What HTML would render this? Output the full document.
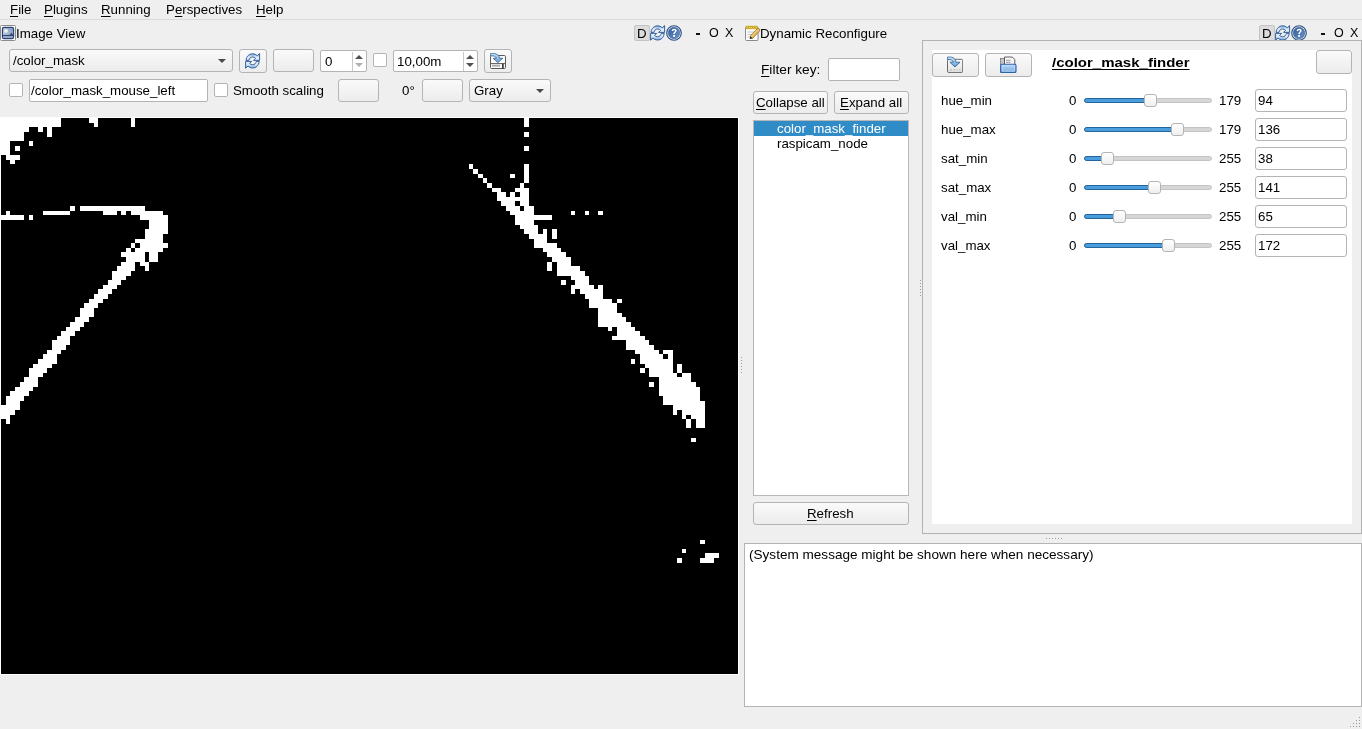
<!DOCTYPE html><html><head><meta charset="utf-8"><style>
html,body{margin:0;padding:0;}
body{width:1362px;height:729px;overflow:hidden;background:#efefef;position:relative;font-family:"Liberation Sans",sans-serif;}
div{position:absolute;box-sizing:border-box;}
.t{white-space:pre;line-height:1em;color:#000;will-change:transform;}
u{text-decoration:underline;text-underline-offset:2px;text-decoration-thickness:1px;}
.btn{border:1px solid #b4b4b4;border-radius:3px;background:linear-gradient(#fafafa,#ececec);}
.edit{border:1px solid #b4b4b4;border-radius:2px;background:#fff;}
.chk{border:1px solid #b4b4b4;border-radius:2px;background:#fff;}
.dbox{border:1px solid #c4c4c4;border-radius:2px;background:#dcdcdc;}
.frame{border:1px solid #b2b2b2;}
.groove{border:1px solid #c4c4c4;border-radius:3px;background:#d6d6d6;}
.fill{border:1px solid #23649a;border-radius:3px;background:#4a9ddc;}
.handle{border:1px solid #b4b4b4;border-radius:3px;background:linear-gradient(#ffffff,#efefef);}
</style></head><body>
<div class="" style="left:0px;top:19px;width:1362px;height:1px;background:#dadada"></div>
<div class="t" style="left:9.60px;top:2.54px;font-size:13.3px;font-weight:400;color:#000;"><u>F</u>ile</div>
<div class="t" style="left:44.10px;top:2.54px;font-size:13.3px;font-weight:400;color:#000;"><u>P</u>lugins</div>
<div class="t" style="left:101.40px;top:2.54px;font-size:13.3px;font-weight:400;color:#000;"><u>R</u>unning</div>
<div class="t" style="left:165.60px;top:2.54px;font-size:13.3px;font-weight:400;color:#000;">P<u>e</u>rspectives</div>
<div class="t" style="left:256.30px;top:2.54px;font-size:13.3px;font-weight:400;color:#000;"><u>H</u>elp</div>
<div style="left:0px;top:25px;width:16px;height:16px;"><svg width="16" height="16" viewBox="0 0 16 16"><defs><linearGradient id="sky" x1="1" y1="0" x2="0" y2="1"><stop offset="0" stop-color="#7e97c0"/><stop offset="1" stop-color="#cdd8ea"/></linearGradient></defs><rect x="0.5" y="0.5" width="15" height="15" rx="1" fill="#fff" stroke="#8c8c8c"/><rect x="2.4" y="2.4" width="11.2" height="11.3" rx="1.6" fill="url(#sky)" stroke="#2d4573" stroke-width="1.2"/><circle cx="6" cy="5.8" r="1.9" fill="#f4f9ec"/><path d="M9.6 10 L11.3 7.6 L13.2 10 Z" fill="#3e5272"/><rect x="3" y="9.9" width="10" height="1.3" fill="#2d4573"/><rect x="3" y="11.6" width="10" height="1.2" fill="#8ea2c4"/></svg></div>
<div class="t" style="left:15.50px;top:26.74px;font-size:13.3px;font-weight:400;color:#000;">Image View</div>
<div class="dbox" style="left:634px;top:25px;width:16px;height:16px;"></div>
<div class="t" style="left:637px;top:26.74px;font-size:13.3px">D</div>
<div style="position:absolute;left:650px;top:25px"><svg width="16" height="16" viewBox="0 0 16 16"><defs><linearGradient id="rga634" x1="0" y1="0" x2="0" y2="1"><stop offset="0" stop-color="#6f9bd3"/><stop offset="0.55" stop-color="#e4effb"/><stop offset="1" stop-color="#cfe2f7"/></linearGradient><linearGradient id="rgb634" x1="0" y1="0" x2="0" y2="1"><stop offset="0" stop-color="#e9f3fc"/><stop offset="0.5" stop-color="#d6e7f8"/><stop offset="1" stop-color="#6f9bd3"/></linearGradient></defs>
<path d="M1 7.4 C1.5 3 4.5 0.8 7.5 0.8 C9.5 0.8 11 1.6 12.2 2.8 L14.6 0.6 L14.6 7.4 L8.5 7.4 L10.6 5.3 C9.8 4.5 8.8 4 7.6 4 C5.6 4 4.2 5.5 3.9 7.4 Z" fill="url(#rga634)" stroke="#2c5b96" stroke-width="0.95" stroke-linejoin="miter"/>
<path d="M14.2 8.4 C13.7 12.8 10.7 15 7.7 15 C5.7 15 4.2 14.2 3 13 L0.6 15.2 L0.6 8.4 L6.7 8.4 L4.6 10.5 C5.4 11.3 6.4 11.8 7.6 11.8 C9.6 11.8 11 10.3 11.3 8.4 Z" fill="url(#rgb634)" stroke="#2c5b96" stroke-width="0.95" stroke-linejoin="miter"/></svg></div>
<div style="position:absolute;left:666px;top:25px"><svg width="16" height="16" viewBox="0 0 16 16"><defs><linearGradient id="hg634" x1="0" y1="0" x2="1" y2="1"><stop offset="0" stop-color="#2f5d9c"/><stop offset="1" stop-color="#6b93c8"/></linearGradient></defs>
<circle cx="8" cy="8" r="7.3" fill="#e8f0fa" stroke="#2b4c7e" stroke-width="1.1"/><circle cx="8" cy="8" r="5.7" fill="url(#hg634)" stroke="#3a5f95" stroke-width="0.6"/>
<path d="M5.7 6.1 C5.7 4.5 6.9 3.7 8.2 3.7 C9.7 3.7 10.6 4.6 10.6 5.8 C10.6 7.3 8.9 7.5 8.9 9.1 L7.3 9.1 C7.3 7 9 6.8 9 5.9 C9 5.3 8.6 5 8.1 5 C7.5 5 7.2 5.5 7.2 6.1 Z" fill="#fff"/><rect x="7.2" y="10" width="1.8" height="1.9" fill="#fff"/></svg></div>
<div class="" style="left:696px;top:32.5px;width:4px;height:2.5px;background:#111"></div>
<div class="t" style="left:708.80px;top:27.42px;font-size:12.5px;font-weight:400;color:#000;">O</div>
<div class="t" style="left:725.30px;top:27.42px;font-size:12.5px;font-weight:400;color:#000;">X</div>
<div class="btn" style="left:9px;top:49px;width:224px;height:23px;border-radius:3px"></div>
<div class="t" style="left:13.30px;top:53.74px;font-size:13.3px;font-weight:400;color:#000;">/color_mask</div>
<div style="left:218px;top:59px;width:0;height:0;border-left:4px solid transparent;border-right:4px solid transparent;border-top:4px solid #4a4a4a"></div>
<div class="btn" style="left:239px;top:49px;width:28px;height:24px;"></div>
<div style="left:245px;top:53px"><svg width="16" height="16" viewBox="0 0 16 16"><defs><linearGradient id="rgatb" x1="0" y1="0" x2="0" y2="1"><stop offset="0" stop-color="#6f9bd3"/><stop offset="0.55" stop-color="#e4effb"/><stop offset="1" stop-color="#cfe2f7"/></linearGradient><linearGradient id="rgbtb" x1="0" y1="0" x2="0" y2="1"><stop offset="0" stop-color="#e9f3fc"/><stop offset="0.5" stop-color="#d6e7f8"/><stop offset="1" stop-color="#6f9bd3"/></linearGradient></defs>
<path d="M1 7.4 C1.5 3 4.5 0.8 7.5 0.8 C9.5 0.8 11 1.6 12.2 2.8 L14.6 0.6 L14.6 7.4 L8.5 7.4 L10.6 5.3 C9.8 4.5 8.8 4 7.6 4 C5.6 4 4.2 5.5 3.9 7.4 Z" fill="url(#rgatb)" stroke="#2c5b96" stroke-width="0.95" stroke-linejoin="miter"/>
<path d="M14.2 8.4 C13.7 12.8 10.7 15 7.7 15 C5.7 15 4.2 14.2 3 13 L0.6 15.2 L0.6 8.4 L6.7 8.4 L4.6 10.5 C5.4 11.3 6.4 11.8 7.6 11.8 C9.6 11.8 11 10.3 11.3 8.4 Z" fill="url(#rgbtb)" stroke="#2c5b96" stroke-width="0.95" stroke-linejoin="miter"/></svg></div>
<div class="btn" style="left:273px;top:49px;width:41px;height:23px;"></div>
<div class="edit" style="left:320px;top:50px;width:47px;height:22px;"></div>
<div class="" style="left:352px;top:52px;width:1px;height:19px;background:#c8c8c8"></div>
<div class="t" style="left:325.10px;top:55.04px;font-size:13.3px;font-weight:400;color:#000;">0</div>
<div style="left:355px;top:55px;width:0;height:0;border-left:4px solid transparent;border-right:4px solid transparent;border-bottom:4px solid #505050"></div>
<div style="left:355px;top:63px;width:0;height:0;border-left:4px solid transparent;border-right:4px solid transparent;border-top:4px solid #b0b0b0"></div>
<div class="chk" style="left:373px;top:53px;width:14px;height:14px;"></div>
<div class="edit" style="left:393px;top:50px;width:85px;height:22px;"></div>
<div class="" style="left:463px;top:52px;width:1px;height:19px;background:#c8c8c8"></div>
<div class="t" style="left:397.30px;top:54.94px;font-size:13.3px;font-weight:400;color:#000;">10,00m</div>
<div style="left:466px;top:55px;width:0;height:0;border-left:4px solid transparent;border-right:4px solid transparent;border-bottom:4px solid #505050"></div>
<div style="left:466px;top:63px;width:0;height:0;border-left:4px solid transparent;border-right:4px solid transparent;border-top:4px solid #505050"></div>
<div class="btn" style="left:484px;top:49px;width:28px;height:24px;"></div>
<div style="left:490px;top:53px"><svg width="16" height="16" viewBox="0 0 16 16"><defs><linearGradient id="sg1" x1="0" y1="0" x2="0" y2="1"><stop offset="0" stop-color="#d4e8f9"/><stop offset="1" stop-color="#5f9ad6"/></linearGradient></defs><rect x="0.5" y="2.5" width="15" height="13" rx="1.2" fill="#fbfbfb" stroke="#5a5a5a"/><path d="M0.5 10.6 H15.5" stroke="#5a5a5a"/><rect x="2" y="11.8" width="8" height="1.8" fill="#a8a8a8"/><rect x="12.2" y="10.8" width="1.4" height="4.6" fill="#111"/><path d="M0.3 0.4 C4 0.1 8.8 0.6 9.6 5.3 L12.8 5.3 L7.9 9.6 L3.2 5.3 L6.4 5.3 C6 3.2 3.5 2.6 0.3 2.8 Z" fill="url(#sg1)" stroke="#2a5c93" stroke-width="0.8" stroke-linejoin="round"/></svg></div>
<div class="chk" style="left:9px;top:83px;width:14px;height:14px;"></div>
<div class="edit" style="left:29px;top:79px;width:179px;height:23px;"></div>
<div class="t" style="left:31.30px;top:83.74px;font-size:13.3px;font-weight:400;color:#000;">/color_mask_mouse_left</div>
<div class="chk" style="left:214px;top:83px;width:14px;height:14px;"></div>
<div class="t" style="left:232.50px;top:83.74px;font-size:13.3px;font-weight:400;color:#000;">Smooth scaling</div>
<div class="btn" style="left:338px;top:79px;width:41px;height:23px;"></div>
<div class="t" style="left:401.80px;top:83.74px;font-size:13.3px;font-weight:400;color:#000;">0°</div>
<div class="btn" style="left:422px;top:79px;width:41px;height:23px;"></div>
<div class="btn" style="left:469px;top:79px;width:82px;height:23px;"></div>
<div class="t" style="left:473.60px;top:83.74px;font-size:13.3px;font-weight:400;color:#000;">Gray</div>
<div style="left:536px;top:89px;width:0;height:0;border-left:4px solid transparent;border-right:4px solid transparent;border-top:4px solid #4a4a4a"></div>
<div style="left:0px;top:117px;width:739px;height:558px;background:#fff"></div>
<div id="mask" style="left:1px;top:118px;width:737px;height:556px;background:#000;overflow:hidden"><svg width="741" height="556" viewBox="0 0 160 120" style="position:absolute;left:-0.5px;top:0" shape-rendering="crispEdges"><g fill="#fff"><rect x="0" y="0" width="13" height="1"/><rect x="19" y="0" width="2" height="1"/><rect x="28" y="0" width="1" height="1"/><rect x="113" y="0" width="1" height="1"/><rect x="0" y="1" width="13" height="1"/><rect x="20" y="1" width="1" height="1"/><rect x="28" y="1" width="1" height="1"/><rect x="113" y="1" width="1" height="1"/><rect x="0" y="2" width="6" height="1"/><rect x="8" y="2" width="1" height="1"/><rect x="10" y="2" width="1" height="1"/><rect x="0" y="3" width="5" height="1"/><rect x="10" y="3" width="1" height="1"/><rect x="113" y="3" width="1" height="1"/><rect x="0" y="4" width="5" height="1"/><rect x="0" y="5" width="2" height="1"/><rect x="6" y="5" width="1" height="1"/><rect x="0" y="6" width="2" height="1"/><rect x="3" y="6" width="1" height="1"/><rect x="113" y="6" width="1" height="1"/><rect x="0" y="7" width="2" height="1"/><rect x="1" y="8" width="3" height="1"/><rect x="2" y="9" width="1" height="1"/><rect x="101" y="10" width="1" height="1"/><rect x="113" y="10" width="1" height="1"/><rect x="102" y="11" width="1" height="1"/><rect x="113" y="11" width="1" height="1"/><rect x="103" y="12" width="1" height="1"/><rect x="110" y="12" width="1" height="1"/><rect x="113" y="12" width="1" height="1"/><rect x="104" y="13" width="1" height="1"/><rect x="113" y="13" width="1" height="1"/><rect x="105" y="14" width="1" height="1"/><rect x="112" y="14" width="1" height="1"/><rect x="106" y="15" width="2" height="1"/><rect x="111" y="15" width="3" height="1"/><rect x="107" y="16" width="2" height="1"/><rect x="110" y="16" width="1" height="1"/><rect x="112" y="16" width="2" height="1"/><rect x="107" y="17" width="7" height="1"/><rect x="108" y="18" width="3" height="1"/><rect x="112" y="18" width="2" height="1"/><rect x="15" y="19" width="1" height="1"/><rect x="17" y="19" width="14" height="1"/><rect x="109" y="19" width="3" height="1"/><rect x="113" y="19" width="2" height="1"/><rect x="1" y="20" width="1" height="1"/><rect x="9" y="20" width="6" height="1"/><rect x="22" y="20" width="3" height="1"/><rect x="26" y="20" width="1" height="1"/><rect x="28" y="20" width="7" height="1"/><rect x="110" y="20" width="5" height="1"/><rect x="123" y="20" width="1" height="1"/><rect x="126" y="20" width="1" height="1"/><rect x="129" y="20" width="1" height="1"/><rect x="0" y="21" width="5" height="1"/><rect x="6" y="21" width="1" height="1"/><rect x="30" y="21" width="6" height="1"/><rect x="111" y="21" width="8" height="1"/><rect x="32" y="22" width="4" height="1"/><rect x="111" y="22" width="4" height="1"/><rect x="32" y="23" width="4" height="1"/><rect x="112" y="23" width="4" height="1"/><rect x="31" y="24" width="5" height="1"/><rect x="113" y="24" width="3" height="1"/><rect x="117" y="24" width="1" height="1"/><rect x="119" y="24" width="1" height="1"/><rect x="31" y="25" width="4" height="1"/><rect x="114" y="25" width="4" height="1"/><rect x="119" y="25" width="1" height="1"/><rect x="29" y="26" width="6" height="1"/><rect x="115" y="26" width="3" height="1"/><rect x="28" y="27" width="1" height="1"/><rect x="30" y="27" width="6" height="1"/><rect x="115" y="27" width="5" height="1"/><rect x="27" y="28" width="1" height="1"/><rect x="29" y="28" width="6" height="1"/><rect x="117" y="28" width="4" height="1"/><rect x="26" y="29" width="5" height="1"/><rect x="32" y="29" width="2" height="1"/><rect x="118" y="29" width="4" height="1"/><rect x="27" y="30" width="4" height="1"/><rect x="32" y="30" width="2" height="1"/><rect x="119" y="30" width="4" height="1"/><rect x="26" y="31" width="3" height="1"/><rect x="30" y="31" width="2" height="1"/><rect x="118" y="31" width="1" height="1"/><rect x="120" y="31" width="3" height="1"/><rect x="25" y="32" width="4" height="1"/><rect x="31" y="32" width="1" height="1"/><rect x="118" y="32" width="1" height="1"/><rect x="120" y="32" width="5" height="1"/><rect x="24" y="33" width="4" height="1"/><rect x="120" y="33" width="6" height="1"/><rect x="24" y="34" width="3" height="1"/><rect x="123" y="34" width="4" height="1"/><rect x="23" y="35" width="3" height="1"/><rect x="121" y="35" width="1" height="1"/><rect x="124" y="35" width="3" height="1"/><rect x="22" y="36" width="3" height="1"/><rect x="123" y="36" width="5" height="1"/><rect x="129" y="36" width="1" height="1"/><rect x="21" y="37" width="3" height="1"/><rect x="123" y="37" width="1" height="1"/><rect x="125" y="37" width="5" height="1"/><rect x="20" y="38" width="3" height="1"/><rect x="126" y="38" width="4" height="1"/><rect x="19" y="39" width="3" height="1"/><rect x="127" y="39" width="5" height="1"/><rect x="133" y="39" width="1" height="1"/><rect x="18" y="40" width="3" height="1"/><rect x="127" y="40" width="6" height="1"/><rect x="17" y="41" width="3" height="1"/><rect x="129" y="41" width="4" height="1"/><rect x="17" y="42" width="3" height="1"/><rect x="129" y="42" width="5" height="1"/><rect x="16" y="43" width="3" height="1"/><rect x="129" y="43" width="6" height="1"/><rect x="15" y="44" width="3" height="1"/><rect x="129" y="44" width="7" height="1"/><rect x="14" y="45" width="3" height="1"/><rect x="131" y="45" width="1" height="1"/><rect x="133" y="45" width="4" height="1"/><rect x="13" y="46" width="3" height="1"/><rect x="133" y="46" width="5" height="1"/><rect x="12" y="47" width="3" height="1"/><rect x="132" y="47" width="7" height="1"/><rect x="11" y="48" width="4" height="1"/><rect x="135" y="48" width="5" height="1"/><rect x="11" y="49" width="3" height="1"/><rect x="135" y="49" width="6" height="1"/><rect x="10" y="50" width="3" height="1"/><rect x="137" y="50" width="5" height="1"/><rect x="143" y="50" width="2" height="1"/><rect x="9" y="51" width="3" height="1"/><rect x="138" y="51" width="5" height="1"/><rect x="144" y="51" width="1" height="1"/><rect x="8" y="52" width="4" height="1"/><rect x="136" y="52" width="1" height="1"/><rect x="138" y="52" width="7" height="1"/><rect x="7" y="53" width="4" height="1"/><rect x="139" y="53" width="6" height="1"/><rect x="146" y="53" width="1" height="1"/><rect x="6" y="54" width="4" height="1"/><rect x="138" y="54" width="1" height="1"/><rect x="140" y="54" width="5" height="1"/><rect x="146" y="54" width="1" height="1"/><rect x="6" y="55" width="3" height="1"/><rect x="140" y="55" width="6" height="1"/><rect x="147" y="55" width="2" height="1"/><rect x="5" y="56" width="3" height="1"/><rect x="142" y="56" width="7" height="1"/><rect x="4" y="57" width="4" height="1"/><rect x="140" y="57" width="1" height="1"/><rect x="142" y="57" width="8" height="1"/><rect x="3" y="58" width="4" height="1"/><rect x="142" y="58" width="9" height="1"/><rect x="2" y="59" width="4" height="1"/><rect x="142" y="59" width="9" height="1"/><rect x="1" y="60" width="4" height="1"/><rect x="143" y="60" width="8" height="1"/><rect x="1" y="61" width="3" height="1"/><rect x="143" y="61" width="9" height="1"/><rect x="0" y="62" width="4" height="1"/><rect x="145" y="62" width="7" height="1"/><rect x="0" y="63" width="3" height="1"/><rect x="145" y="63" width="1" height="1"/><rect x="147" y="63" width="5" height="1"/><rect x="0" y="64" width="2" height="1"/><rect x="147" y="64" width="1" height="1"/><rect x="149" y="64" width="3" height="1"/><rect x="1" y="65" width="1" height="1"/><rect x="148" y="65" width="1" height="1"/><rect x="150" y="65" width="2" height="1"/><rect x="148" y="66" width="1" height="1"/><rect x="150" y="66" width="2" height="1"/><rect x="149" y="69" width="1" height="1"/><rect x="151" y="91" width="1" height="1"/><rect x="147" y="93" width="1" height="1"/><rect x="152" y="94" width="3" height="1"/><rect x="146" y="95" width="1" height="1"/><rect x="151" y="95" width="3" height="1"/></g></svg></div>
<div class="" style="left:741px;top:357px;width:1px;height:1px;background:#9c9c9c"></div>
<div class="" style="left:741px;top:360px;width:1px;height:1px;background:#9c9c9c"></div>
<div class="" style="left:741px;top:363px;width:1px;height:1px;background:#9c9c9c"></div>
<div class="" style="left:741px;top:366px;width:1px;height:1px;background:#9c9c9c"></div>
<div class="" style="left:741px;top:369px;width:1px;height:1px;background:#9c9c9c"></div>
<div class="" style="left:741px;top:372px;width:1px;height:1px;background:#9c9c9c"></div>
<div style="left:744px;top:25px"><svg width="17" height="17" viewBox="0 0 17 17"><rect x="1.5" y="2" width="12.5" height="13.5" rx="1" fill="#fdfdfd" stroke="#8a8a8a"/><rect x="1.8" y="0.8" width="11.8" height="3.4" fill="#d9b52c"/><g fill="#f3df66" stroke="#a8891c" stroke-width="0.5"><circle cx="3.2" cy="2.4" r="1"/><circle cx="5.4" cy="2.4" r="1"/><circle cx="7.6" cy="2.4" r="1"/><circle cx="9.8" cy="2.4" r="1"/><circle cx="12" cy="2.4" r="1"/></g><path d="M3.5 7h7M3.5 9.5h6M3.5 12h5" stroke="#c4c4c4"/><path d="M6.2 11.2 L13 4 Q14.3 2.8 15.4 3.9 Q16.5 5 15.3 6.3 L8.5 13.5 Z" fill="#e6b95c" stroke="#86601c" stroke-width="0.7"/><path d="M7 11.8 L14.2 4.4" stroke="#f6dc9a" stroke-width="0.9"/><path d="M6.2 11.2 L5.7 13.9 L8.5 13.5 Z" fill="#222"/></svg></div>
<div class="t" style="left:759.60px;top:26.74px;font-size:13.3px;font-weight:400;color:#000;">Dynamic Reconfigure</div>
<div class="dbox" style="left:1259px;top:25px;width:16px;height:16px;"></div>
<div class="t" style="left:1262px;top:26.74px;font-size:13.3px">D</div>
<div style="position:absolute;left:1275px;top:25px"><svg width="16" height="16" viewBox="0 0 16 16"><defs><linearGradient id="rga1259" x1="0" y1="0" x2="0" y2="1"><stop offset="0" stop-color="#6f9bd3"/><stop offset="0.55" stop-color="#e4effb"/><stop offset="1" stop-color="#cfe2f7"/></linearGradient><linearGradient id="rgb1259" x1="0" y1="0" x2="0" y2="1"><stop offset="0" stop-color="#e9f3fc"/><stop offset="0.5" stop-color="#d6e7f8"/><stop offset="1" stop-color="#6f9bd3"/></linearGradient></defs>
<path d="M1 7.4 C1.5 3 4.5 0.8 7.5 0.8 C9.5 0.8 11 1.6 12.2 2.8 L14.6 0.6 L14.6 7.4 L8.5 7.4 L10.6 5.3 C9.8 4.5 8.8 4 7.6 4 C5.6 4 4.2 5.5 3.9 7.4 Z" fill="url(#rga1259)" stroke="#2c5b96" stroke-width="0.95" stroke-linejoin="miter"/>
<path d="M14.2 8.4 C13.7 12.8 10.7 15 7.7 15 C5.7 15 4.2 14.2 3 13 L0.6 15.2 L0.6 8.4 L6.7 8.4 L4.6 10.5 C5.4 11.3 6.4 11.8 7.6 11.8 C9.6 11.8 11 10.3 11.3 8.4 Z" fill="url(#rgb1259)" stroke="#2c5b96" stroke-width="0.95" stroke-linejoin="miter"/></svg></div>
<div style="position:absolute;left:1291px;top:25px"><svg width="16" height="16" viewBox="0 0 16 16"><defs><linearGradient id="hg1259" x1="0" y1="0" x2="1" y2="1"><stop offset="0" stop-color="#2f5d9c"/><stop offset="1" stop-color="#6b93c8"/></linearGradient></defs>
<circle cx="8" cy="8" r="7.3" fill="#e8f0fa" stroke="#2b4c7e" stroke-width="1.1"/><circle cx="8" cy="8" r="5.7" fill="url(#hg1259)" stroke="#3a5f95" stroke-width="0.6"/>
<path d="M5.7 6.1 C5.7 4.5 6.9 3.7 8.2 3.7 C9.7 3.7 10.6 4.6 10.6 5.8 C10.6 7.3 8.9 7.5 8.9 9.1 L7.3 9.1 C7.3 7 9 6.8 9 5.9 C9 5.3 8.6 5 8.1 5 C7.5 5 7.2 5.5 7.2 6.1 Z" fill="#fff"/><rect x="7.2" y="10" width="1.8" height="1.9" fill="#fff"/></svg></div>
<div class="" style="left:1321px;top:32.5px;width:4px;height:2.5px;background:#111"></div>
<div class="t" style="left:1333.80px;top:27.42px;font-size:12.5px;font-weight:400;color:#000;">O</div>
<div class="t" style="left:1350.30px;top:27.42px;font-size:12.5px;font-weight:400;color:#000;">X</div>
<div class="t" style="left:761.30px;top:62.74px;font-size:13.3px;font-weight:400;color:#000;transform:scaleX(1.03);transform-origin:0 0"><u>F</u>ilter key:</div>
<div class="edit" style="left:828px;top:58px;width:72px;height:23px;"></div>
<div class="btn" style="left:753px;top:91px;width:75px;height:23px;"></div>
<div class="t" style="left:755.80px;top:95.74px;font-size:13.3px;font-weight:400;color:#000;"><u>C</u>ollapse all</div>
<div class="btn" style="left:834px;top:91px;width:75px;height:23px;"></div>
<div class="t" style="left:839.50px;top:95.74px;font-size:13.3px;font-weight:400;color:#000;"><u>E</u>xpand all</div>
<div class="edit" style="left:753px;top:120px;width:156px;height:376px;border-radius:0;border-color:#b8b8b8"></div>
<div class="" style="left:754px;top:121px;width:154px;height:15px;background:#308cc6"></div>
<div class="t" style="left:776.70px;top:121.54px;font-size:13.3px;font-weight:400;color:#fff;">color_mask_finder</div>
<div class="t" style="left:776.70px;top:136.54px;font-size:13.3px;font-weight:400;color:#000;">raspicam_node</div>
<div class="btn" style="left:753px;top:502px;width:156px;height:23px;"></div>
<div class="t" style="left:807.00px;top:506.74px;font-size:13.3px;font-weight:400;color:#000;"><u>R</u>efresh</div>
<div class="frame" style="left:922px;top:40px;width:440px;height:494px;"></div>
<div class="" style="left:932px;top:50px;width:420px;height:474px;background:#fff"></div>
<div class="btn" style="left:932px;top:53px;width:47px;height:24px;"></div>
<div style="left:947px;top:56px"><svg width="16" height="17" viewBox="0 0 16 17"><defs><linearGradient id="lg1" x1="0" y1="0" x2="0" y2="1"><stop offset="0" stop-color="#d4e8f9"/><stop offset="1" stop-color="#5f9ad6"/></linearGradient><linearGradient id="lb1" x1="0" y1="0" x2="0" y2="1"><stop offset="0" stop-color="#ffffff"/><stop offset="1" stop-color="#dedede"/></linearGradient></defs><rect x="0.5" y="3.3" width="15.2" height="13.3" rx="1.5" fill="url(#lb1)" stroke="#6a6a6a"/><path d="M3 13.8h2M6.5 13.8h1.5M9.5 13.8h1M12 13.8h1.5" stroke="#bdbdbd" stroke-width="1.2"/><path d="M0.4 1.1 C4.5 0.7 8.4 1.4 9 6.2 L13.1 6.2 L8 11 L2.8 6.2 L6.4 6.2 C6 4.2 3.6 3.4 0.4 3.6 Z" fill="url(#lg1)" stroke="#2a5c93" stroke-width="0.8" stroke-linejoin="round"/></svg></div>
<div class="btn" style="left:985px;top:53px;width:47px;height:24px;"></div>
<div style="left:1000px;top:56px"><svg width="17" height="17" viewBox="0 0 17 17"><defs><linearGradient id="fb1" x1="0" y1="0" x2="0" y2="1"><stop offset="0" stop-color="#bcd9f6"/><stop offset="1" stop-color="#76a8e0"/></linearGradient></defs><rect x="0.5" y="2.5" width="4.2" height="14" fill="#c4c4c4" stroke="#7a7a7a" stroke-width="0.8"/><path d="M4.5 1 H12.3 L14.8 3.6 V9.5 H4.5 Z" fill="#f8f8f8" stroke="#505050" stroke-width="0.9"/><path d="M6 4.3 H10.5 M6 6.3 H10.5" stroke="#9a9a9a"/><rect x="0.7" y="8.3" width="15.3" height="8.2" rx="1.2" fill="url(#fb1)" stroke="#2e62a6" stroke-width="1.1"/><rect x="2.2" y="9.8" width="12.3" height="5.2" fill="none" stroke="#c6e0fb" stroke-width="0.6"/></svg></div>
<div class="t" style="left:1051.60px;top:56.04px;font-size:13.3px;font-weight:700;color:#000;text-decoration:underline;text-decoration-thickness:1px;text-underline-offset:2px;transform:scaleX(1.128);transform-origin:0 0">/color_mask_finder</div>
<div class="btn" style="left:1316px;top:50px;width:36px;height:24px;"></div>
<div class="t" style="left:940.80px;top:93.54px;font-size:13.3px;font-weight:400;color:#000;">hue_min</div>
<div class="t" style="left:1068.80px;top:93.54px;font-size:13.3px;font-weight:400;color:#000;">0</div>
<div class="groove" style="left:1084px;top:97.80000000000001px;width:128px;height:5.199999999999989px;"></div>
<div class="fill" style="left:1084px;top:97.80000000000001px;width:66px;height:5.199999999999989px;"></div>
<div class="handle" style="left:1144px;top:93.9px;width:13px;height:13.0px;"></div>
<div class="t" style="left:1219.00px;top:93.54px;font-size:13.3px;font-weight:400;color:#000;">179</div>
<div class="edit" style="left:1255px;top:89.0px;width:92px;height:23.200000000000003px;border-radius:3px"></div>
<div class="t" style="left:1258.30px;top:93.54px;font-size:13.3px;font-weight:400;color:#000;">94</div>
<div class="t" style="left:940.80px;top:122.54px;font-size:13.3px;font-weight:400;color:#000;">hue_max</div>
<div class="t" style="left:1068.80px;top:122.54px;font-size:13.3px;font-weight:400;color:#000;">0</div>
<div class="groove" style="left:1084px;top:126.80000000000001px;width:128px;height:5.199999999999989px;"></div>
<div class="fill" style="left:1084px;top:126.80000000000001px;width:92.5px;height:5.199999999999989px;"></div>
<div class="handle" style="left:1170.5px;top:122.9px;width:13.0px;height:13.0px;"></div>
<div class="t" style="left:1219.00px;top:122.54px;font-size:13.3px;font-weight:400;color:#000;">179</div>
<div class="edit" style="left:1255px;top:118.0px;width:92px;height:23.200000000000017px;border-radius:3px"></div>
<div class="t" style="left:1258.30px;top:122.54px;font-size:13.3px;font-weight:400;color:#000;">136</div>
<div class="t" style="left:940.80px;top:151.54px;font-size:13.3px;font-weight:400;color:#000;">sat_min</div>
<div class="t" style="left:1068.80px;top:151.54px;font-size:13.3px;font-weight:400;color:#000;">0</div>
<div class="groove" style="left:1084px;top:155.8px;width:128px;height:5.199999999999989px;"></div>
<div class="fill" style="left:1084px;top:155.8px;width:23px;height:5.199999999999989px;"></div>
<div class="handle" style="left:1101px;top:151.9px;width:13px;height:13.0px;"></div>
<div class="t" style="left:1219.00px;top:151.54px;font-size:13.3px;font-weight:400;color:#000;">255</div>
<div class="edit" style="left:1255px;top:147.0px;width:92px;height:23.200000000000017px;border-radius:3px"></div>
<div class="t" style="left:1258.30px;top:151.54px;font-size:13.3px;font-weight:400;color:#000;">38</div>
<div class="t" style="left:940.80px;top:180.54px;font-size:13.3px;font-weight:400;color:#000;">sat_max</div>
<div class="t" style="left:1068.80px;top:180.54px;font-size:13.3px;font-weight:400;color:#000;">0</div>
<div class="groove" style="left:1084px;top:184.8px;width:128px;height:5.199999999999989px;"></div>
<div class="fill" style="left:1084px;top:184.8px;width:69.79999999999995px;height:5.199999999999989px;"></div>
<div class="handle" style="left:1147.8px;top:180.9px;width:13.0px;height:13.0px;"></div>
<div class="t" style="left:1219.00px;top:180.54px;font-size:13.3px;font-weight:400;color:#000;">255</div>
<div class="edit" style="left:1255px;top:176.0px;width:92px;height:23.200000000000017px;border-radius:3px"></div>
<div class="t" style="left:1258.30px;top:180.54px;font-size:13.3px;font-weight:400;color:#000;">141</div>
<div class="t" style="left:940.80px;top:209.54px;font-size:13.3px;font-weight:400;color:#000;">val_min</div>
<div class="t" style="left:1068.80px;top:209.54px;font-size:13.3px;font-weight:400;color:#000;">0</div>
<div class="groove" style="left:1084px;top:213.8px;width:128px;height:5.199999999999989px;"></div>
<div class="fill" style="left:1084px;top:213.8px;width:34.799999999999955px;height:5.199999999999989px;"></div>
<div class="handle" style="left:1112.8px;top:209.9px;width:13.0px;height:13.0px;"></div>
<div class="t" style="left:1219.00px;top:209.54px;font-size:13.3px;font-weight:400;color:#000;">255</div>
<div class="edit" style="left:1255px;top:205.0px;width:92px;height:23.200000000000017px;border-radius:3px"></div>
<div class="t" style="left:1258.30px;top:209.54px;font-size:13.3px;font-weight:400;color:#000;">65</div>
<div class="t" style="left:940.80px;top:238.54px;font-size:13.3px;font-weight:400;color:#000;">val_max</div>
<div class="t" style="left:1068.80px;top:238.54px;font-size:13.3px;font-weight:400;color:#000;">0</div>
<div class="groove" style="left:1084px;top:242.8px;width:128px;height:5.199999999999989px;"></div>
<div class="fill" style="left:1084px;top:242.8px;width:83.79999999999995px;height:5.199999999999989px;"></div>
<div class="handle" style="left:1161.8px;top:238.9px;width:13.0px;height:13.0px;"></div>
<div class="t" style="left:1219.00px;top:238.54px;font-size:13.3px;font-weight:400;color:#000;">255</div>
<div class="edit" style="left:1255px;top:234.0px;width:92px;height:23.19999999999999px;border-radius:3px"></div>
<div class="t" style="left:1258.30px;top:238.54px;font-size:13.3px;font-weight:400;color:#000;">172</div>
<div class="" style="left:1046px;top:538px;width:1px;height:1px;background:#9c9c9c"></div>
<div class="" style="left:1049px;top:538px;width:1px;height:1px;background:#9c9c9c"></div>
<div class="" style="left:1052px;top:538px;width:1px;height:1px;background:#9c9c9c"></div>
<div class="" style="left:1055px;top:538px;width:1px;height:1px;background:#9c9c9c"></div>
<div class="" style="left:1058px;top:538px;width:1px;height:1px;background:#9c9c9c"></div>
<div class="" style="left:1061px;top:538px;width:1px;height:1px;background:#9c9c9c"></div>
<div class="" style="left:920px;top:280px;width:1px;height:1px;background:#9c9c9c"></div>
<div class="" style="left:920px;top:283px;width:1px;height:1px;background:#9c9c9c"></div>
<div class="" style="left:920px;top:286px;width:1px;height:1px;background:#9c9c9c"></div>
<div class="" style="left:920px;top:289px;width:1px;height:1px;background:#9c9c9c"></div>
<div class="" style="left:920px;top:292px;width:1px;height:1px;background:#9c9c9c"></div>
<div class="" style="left:920px;top:295px;width:1px;height:1px;background:#9c9c9c"></div>
<div class="" style="left:744px;top:543px;width:618px;height:164px;background:#fff;border:1px solid #b4b4b4"></div>
<div class="t" style="left:748.80px;top:548.44px;font-size:13.3px;font-weight:400;color:#000;transform:scaleX(1.02);transform-origin:0 0">(System message might be shown here when necessary)</div>
<div class="" style="left:1359px;top:717px;width:1px;height:1px;background:#999"></div>
<div class="" style="left:1356px;top:720px;width:1px;height:1px;background:#999"></div>
<div class="" style="left:1359px;top:720px;width:1px;height:1px;background:#999"></div>
<div class="" style="left:1353px;top:723px;width:1px;height:1px;background:#999"></div>
<div class="" style="left:1356px;top:723px;width:1px;height:1px;background:#999"></div>
<div class="" style="left:1359px;top:723px;width:1px;height:1px;background:#999"></div>
<div class="" style="left:1350px;top:726px;width:1px;height:1px;background:#999"></div>
<div class="" style="left:1353px;top:726px;width:1px;height:1px;background:#999"></div>
<div class="" style="left:1356px;top:726px;width:1px;height:1px;background:#999"></div>
<div class="" style="left:1359px;top:726px;width:1px;height:1px;background:#999"></div>
</body></html>
